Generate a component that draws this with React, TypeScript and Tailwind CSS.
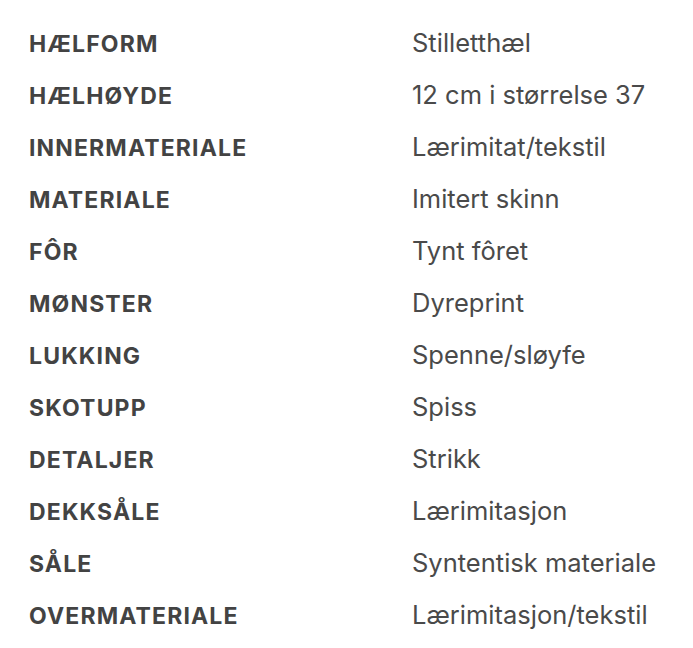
const rows = [
  ['HÆLFORM', 'Stilletthæl'],
  ['HÆLHØYDE', '12 cm i størrelse 37'],
  ['INNERMATERIALE', 'Lærimitat/tekstil'],
  ['MATERIALE', 'Imitert skinn'],
  ['FÔR', 'Tynt fôret'],
  ['MØNSTER', 'Dyreprint'],
  ['LUKKING', 'Spenne/sløyfe'],
  ['SKOTUPP', 'Spiss'],
  ['DETALJER', 'Strikk'],
  ['DEKKSÅLE', 'Lærimitasjon'],
  ['SÅLE', 'Syntentisk materiale'],
  ['OVERMATERIALE', 'Lærimitasjon/tekstil'],
];

export default function App() {
  return (
    <div className="min-h-[648px] w-[693px] bg-white pt-[17px] font-['Inter',sans-serif]">
      <dl className="flex flex-col">
        {rows.map(([label, value]) => (
          <div key={label} className="flex h-[52px] items-baseline leading-[52px]">
            <dt className="w-[412px] shrink-0 pl-[29px] text-[23px] font-bold tracking-[0.05em] text-[#434343]">
              {label}
            </dt>
            <dd className="text-[25.5px] text-[#4a4a4a]">{value}</dd>
          </div>
        ))}
      </dl>
    </div>
  );
}
